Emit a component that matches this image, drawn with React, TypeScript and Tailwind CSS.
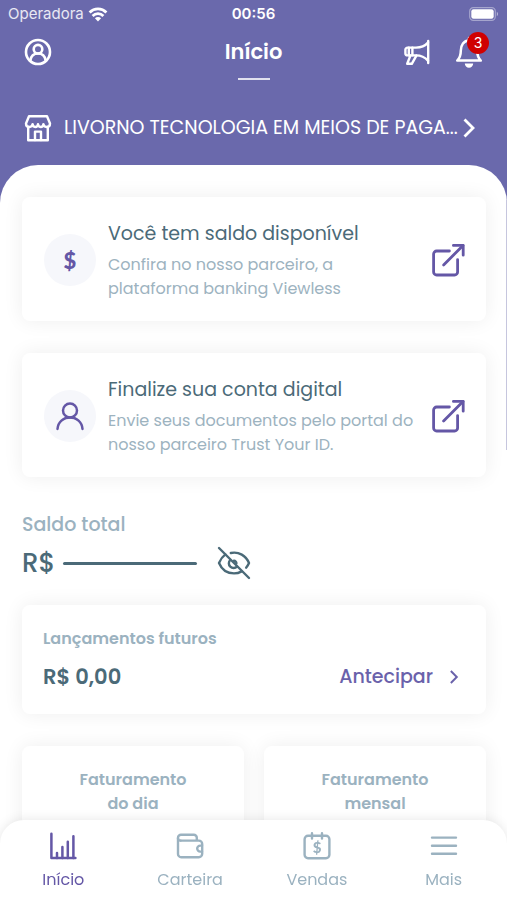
import React from 'react';
import { clsx } from 'clsx';

interface IconProps {
  className?: string;
}

const stroke = {
  fill: 'none',
  stroke: 'currentColor',
  strokeLinecap: 'round' as const,
  strokeLinejoin: 'round' as const,
  'aria-hidden': true,
};

const WifiIcon = () => (
  <svg viewBox="0 0 20 15" className="h-[15px] w-5" fill="none" stroke="currentColor" strokeWidth="2.8" aria-hidden>
    <path d="M1.6 5.4a12 12 0 0 1 16.8 0" />
    <path d="M4.6 8.9a7.6 7.6 0 0 1 10.8 0" />
    <path d="M10 14.4 6.9 11.2a4.4 4.4 0 0 1 6.2 0z" fill="currentColor" stroke="none" />
  </svg>
);

const BatteryIcon = () => (
  <svg viewBox="0 0 30 14" className="h-[14px] w-[30px]" aria-hidden>
    <rect x="0.7" y="0.7" width="25.6" height="12.6" rx="3.6" fill="none" stroke="white" strokeOpacity="0.4" strokeWidth="1.2" />
    <rect x="2.3" y="2.3" width="22.4" height="9.4" rx="2.2" fill="white" />
    <path d="M27.8 4.8c1.7.7 1.7 3.7 0 4.4z" fill="white" fillOpacity="0.5" />
  </svg>
);

const ProfileIcon = () => (
  <svg viewBox="0 0 28 28" className="size-7" {...stroke} strokeWidth="2.6">
    <circle cx="14" cy="14" r="12" />
    <circle cx="14" cy="11.2" r="4.3" />
    <path d="M6.4 22.4c.6-4.2 3.5-6.9 7.6-6.9s7 2.7 7.6 6.9" />
  </svg>
);

const MegaphoneIcon = () => (
  <svg viewBox="0 0 28 28" className="size-7" {...stroke} strokeWidth="2.4">
    <path d="M25.2 3v22" />
    <path d="M25 4.600c-3.300 3.700-7.400 5-12 5H4.600a2.200 2.200 0 0 0-2.200 2.200v3.400a2.200 2.200 0 0 0 2.200 2.200H13c4.600 0 8.700 1.500 12 5.200" />
    <path d="M5.800 9.800v7.400M9.400 9.800v7.400" />
    <path d="m7.400 17.600-3.200 8.200h4.600l4.600-8.200" />
  </svg>
);

const BellIcon = () => (
  <svg viewBox="0 0 28 32" className="h-8 w-7" {...stroke} strokeWidth="2.5">
    <path d="M2.200 24.600c2.600-2.500 3.600-5 3.600-9.800 0-5.600 3-10.200 8.200-10.200s8.200 4.600 8.200 10.200c0 4.800 1 7.300 3.600 9.800z" />
    <path d="M14 2v2.600" />
    <path d="M9.800 27.600h8.400a4.200 4.200 0 0 1-8.400 0z" fill="currentColor" stroke="none" />
  </svg>
);

const StoreIcon = () => (
  <svg viewBox="0 0 28 28" className="size-7 shrink-0" {...stroke} strokeWidth="2.4">
    <path d="M5 2.200h18l3 7.300c0 2.200-1.600 3.500-3.300 3.500-2 0-3.300-1.300-3.300-2.900 0 1.600-1.100 2.900-2.700 2.900S14 11.700 14 10.100c0 1.600-1.100 2.900-2.700 2.900s-2.700-1.300-2.700-2.900c0 1.600-1.300 2.900-3.300 2.900C3.600 13 2 11.700 2 9.500z" />
    <path d="M4.200 13v13.200h19.600V13" />
    <path d="M11 26v-8.400h6V26" />
  </svg>
);

const ChevronIcon = ({ className }: IconProps) => (
  <svg viewBox="0 0 12 20" className={className} fill="none" stroke="currentColor" strokeWidth="2.8" aria-hidden>
    <path d="m1.500 1.500 8.500 8.500-8.500 8.500" />
  </svg>
);

const ExternalIcon = () => (
  <svg viewBox="0 0 34 34" className="size-[34px] shrink-0" {...stroke} strokeWidth="2.8">
    <path d="M18.400 8H5.600a3 3 0 0 0-3 3v18a3 3 0 0 0 3 3h18a3 3 0 0 0 3-3V16.600" />
    <path d="M12.600 22 32 2.600" />
    <path d="M22.400 2.400h9.800v9.800" />
  </svg>
);

const PersonIcon = () => (
  <svg viewBox="0 0 28 30" className="h-[30px] w-7" {...stroke} strokeWidth="2.5">
    <circle cx="14" cy="9.500" r="7" />
    <path d="M1.500 28C2 21 7.300 16.500 14 16.500S26 21 26.500 28" />
  </svg>
);

const EyeOffIcon = () => (
  <svg viewBox="0 0 34 34" className="size-[34px]" {...stroke} strokeWidth="2.4">
    <path d="M2 2l30 30" />
    <path d="M8.400 8.400C5.400 10.600 3.400 13.700 2 17c2.600 6.200 8.200 10.400 15 10.400 2.800 0 5.400-.7 7.600-2" />
    <path d="M13.800 7c8-1.700 15.200 2.600 18.200 10-.7 1.700-1.700 3.300-2.900 4.700" />
    <path d="M13.200 14a4.700 4.700 0 1 0 6.800 6.600" />
    <path d="M16.800 14.800a2.400 2.400 0 0 1 2.600 2.600" />
  </svg>
);

const ChartIcon = () => (
  <svg viewBox="0 0 28 28" className="size-7" {...stroke} strokeWidth="2.5">
    <path d="M2.400 1.800V26h24" />
    <path d="M8 26v-5M13.400 26V15M18.800 26V9.700M24.400 26V4.200" />
  </svg>
);

const WalletIcon = () => (
  <svg viewBox="0 0 28 28" className="size-7" {...stroke} strokeWidth="2.4">
    <path d="M4.600 8.600h18.200a3.400 3.400 0 0 1 3.400 3.400v9.800a3.400 3.400 0 0 1-3.400 3.400H5.200A3.200 3.200 0 0 1 2 22V5.800A3 3 0 0 1 5 2.800h12.800a3 3 0 0 1 3 3v2.800" />
    <path d="M2 6.200c0 1.600 1.200 2.400 2.600 2.400" />
    <path d="M26 13.600h-1.800a3 3 0 0 0 0 6H26" />
  </svg>
);

const SalesIcon = () => (
  <svg viewBox="0 0 28 28" className="size-7" {...stroke} strokeWidth="2.4">
    <rect x="1.6" y="3.8" width="24.8" height="22.4" rx="3.4" />
    <path d="M9 1.200v5.400M19 1.200v5.400" />
    <text x="14" y="20.5" textAnchor="middle" fontSize="15" fontWeight="900" fontFamily="Lato, sans-serif" fill="currentColor" stroke="none">$</text>
  </svg>
);

const MenuIcon = () => (
  <svg viewBox="0 0 28 28" className="size-7" {...stroke} strokeWidth="2.4">
    <path d="M2 5.600h24M2 13.700h24M2 21.800h24" />
  </svg>
);

const Card = ({ className, children }: { className?: string; children: React.ReactNode }) => (
  <div className={clsx('rounded-lg bg-white shadow-[0_0_20px_rgba(0,0,0,0.07)]', className)}>{children}</div>
);

interface PartnerCardProps {
  icon: React.ReactNode;
  title: string;
  text: string;
}

const PartnerCard: React.FC<PartnerCardProps> = ({ icon, title, text }) => (
  <Card>
    <a href="#" className="flex items-center gap-3 pt-[22px] pr-[21px] pb-5 pl-[22px]">
      <span className="flex size-[52px] shrink-0 items-center justify-center rounded-full bg-[#f6f7fb] text-[#6457a6]">
        {icon}
      </span>
      <span className="min-w-0 flex-1">
        <span className="block text-[19px] leading-[30px] text-[#4b6a78]">{title}</span>
        <span className="mt-1 block text-base leading-6 text-[#9db3bf]">{text}</span>
      </span>
      <span className="text-[#6457a6]">
        <ExternalIcon />
      </span>
    </a>
  </Card>
);

const tabs = [
  { label: 'Início', icon: <ChartIcon />, active: true },
  { label: 'Carteira', icon: <WalletIcon /> },
  { label: 'Vendas', icon: <SalesIcon /> },
  { label: 'Mais', icon: <MenuIcon /> },
];

export default function App() {
  return (
    <div className="relative flex h-screen flex-col overflow-hidden bg-[#6a69ac] font-[Poppins,Inter,sans-serif]">
      <header className="text-white">
        {/* Status bar */}
        <div className="grid h-7 grid-cols-3 items-center px-2 font-[Inter,sans-serif] text-[15px]">
          <div className="flex items-center gap-1 text-white/85">
            Operadora
            <span className="text-white"><WifiIcon /></span>
          </div>
          <span className="text-center font-semibold">00:56</span>
          <div className="flex justify-end">
            <BatteryIcon />
          </div>
        </div>

        {/* Title bar */}
        <div className="grid h-12 grid-cols-3 items-center px-6">
          <button type="button" aria-label="Perfil" className="justify-self-start">
            <ProfileIcon />
          </button>
          <h1 className="text-center text-[21px] font-semibold">Início</h1>
          <div className="flex items-center justify-end gap-6">
            <button type="button" aria-label="Novidades">
              <MegaphoneIcon />
            </button>
            <button type="button" aria-label="Notificações" className="relative">
              <BellIcon />
              <span className="absolute -top-1 -right-1.5 flex size-[22px] items-center justify-center rounded-full bg-[#d00000] font-[Inter,sans-serif] text-sm">
                3
              </span>
            </button>
          </div>
        </div>
        <div className="mx-auto mt-0.5 h-0.5 w-8 bg-white/80" />

        <button type="button" className="mt-7 flex w-full items-center px-6 pb-[17px] text-left">
          <StoreIcon />
          <span className="ml-3 min-w-0 flex-1 truncate text-[19px] leading-10">
            LIVORNO TECNOLOGIA EM MEIOS DE PAGA...
          </span>
          <ChevronIcon className="mr-2 h-5 w-3 shrink-0" />
        </button>
      </header>

      <main className="min-h-0 flex-1 overflow-y-auto rounded-t-[38px] bg-white pt-8 pr-[21px] pb-24 pl-[22px] [scrollbar-width:none]">
        <div className="flex flex-col gap-8">
          <PartnerCard
            icon={<span className="font-[Lato,sans-serif] text-[22px] font-black">$</span>}
            title="Você tem saldo disponível"
            text="Confira no nosso parceiro, a plataforma banking Viewless"
          />
          <PartnerCard
            icon={<PersonIcon />}
            title="Finalize sua conta digital"
            text="Envie seus documentos pelo portal do nosso parceiro Trust Your ID."
          />
        </div>

        <section className="mt-8">
          <h2 className="text-[19px] leading-8 font-medium text-[#9bb2c0]">Saldo total</h2>
          <div className="mt-1 flex h-9 items-center text-[#4b6a78]">
            <span className="text-[26px] font-medium">R$</span>
            <span className="ml-2 h-[3px] w-[134px] rounded-full bg-current" />
            <button type="button" aria-label="Mostrar saldo" className="ml-5">
              <EyeOffIcon />
            </button>
          </div>
        </section>

        <Card className="mt-6 px-[21px] pt-[22px] pb-[21px]">
          <h3 className="text-base leading-6 font-semibold text-[#9bb2c0]">Lançamentos futuros</h3>
          <div className="mt-2.5 flex items-center justify-between">
            <span className="text-[21px] leading-8 font-semibold text-[#4b6a78]">R$ 0,00</span>
            <a href="#" className="flex items-center gap-4 text-[19px] leading-8 font-medium text-[#6a62ab]">
              Antecipar
              <ChevronIcon className="mr-1.5 h-3.5 w-2.5" />
            </a>
          </div>
        </Card>

        <div className="mt-8 grid grid-cols-2 gap-5 text-center text-base leading-6 font-semibold text-[#9bb2c0]">
          <Card className="px-5 pt-[22px] pb-20">
            <h3>Faturamento<br />do dia</h3>
          </Card>
          <Card className="px-5 pt-[22px] pb-20">
            <h3>Faturamento<br />mensal</h3>
          </Card>
        </div>
      </main>

      {/* Scroll indicator */}
      <div className="absolute top-[200px] right-0 h-[250px] w-px bg-[#c6c6de]" />

      <nav className="fixed inset-x-0 bottom-0 grid h-20 grid-cols-4 rounded-t-3xl bg-white pt-3 shadow-[0_0_12px_rgba(0,0,0,0.1)]">
        {tabs.map((tab) => (
          <a
            key={tab.label}
            href="#"
            className={clsx('flex flex-col items-center gap-2 text-base', tab.active ? 'text-[#6457a6]' : 'text-[#9bb2c0]')}
          >
            {tab.icon}
            {tab.label}
          </a>
        ))}
      </nav>
    </div>
  );
}
